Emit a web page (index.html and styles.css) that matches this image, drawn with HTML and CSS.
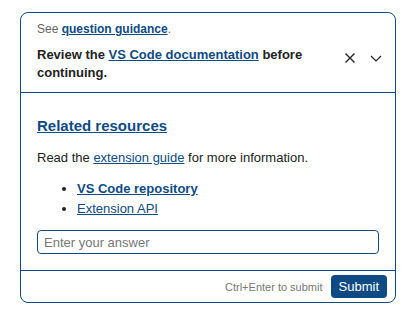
FILE: index.html
```html
<!DOCTYPE html>
<html lang="en">
  <head>
    <meta charset="UTF-8" />
    <meta name="viewport" content="width=device-width, initial-scale=1.0" />
    <title>Question</title>
    <link rel="stylesheet" href="styles.css">
  </head>
  <body>
    <div class="card">
      <div class="card-header">
        <div class="header-text">
          <p class="hint">See <a href="#" class="strong-link">question guidance</a>.</p>
          <p class="notice">Review the <a href="#">VS Code documentation</a> before continuing.</p>
        </div>
        <div class="header-actions">
          <button class="icon-btn" aria-label="Dismiss">
            <svg width="14" height="14" viewBox="0 0 14 14">
              <path d="M2.5 2.5 L11.5 11.5 M11.5 2.5 L2.5 11.5" stroke="#222" stroke-width="1.4" fill="none" />
            </svg>
          </button>
          <button class="icon-btn" aria-label="Collapse">
            <svg width="14" height="14" viewBox="0 0 14 14">
              <path d="M2 5 L7 10 L12 5" stroke="#222" stroke-width="1.2" fill="none" />
            </svg>
          </button>
        </div>
      </div>

      <div class="card-body">
        <h2><a href="#">Related resources</a></h2>
        <p>Read the <a href="#">extension guide</a> for more information.</p>
        <ul class="links">
          <li><a href="#" class="strong-link">VS Code repository</a></li>
          <li><a href="#">Extension API</a></li>
        </ul>
        <input type="text" class="answer" placeholder="Enter your answer" />
      </div>

      <div class="card-footer">
        <span class="shortcut">Ctrl+Enter to submit</span>
        <button class="submit">Submit</button>
      </div>
    </div>
  </body>
</html>
```

FILE: styles.css
```css
body {
  margin: 0;
  padding: 12px 20px;
  font-family: "Liberation Sans", Arial, sans-serif;
  color: #222;
  background: #fff;
}
a {
  color: #0e4a84;
}
.card {
  border: 1px solid #0e4a84;
  border-radius: 8px;
}
.card-header {
  display: flex;
  align-items: flex-start;
  padding: 9px 10px 10px 16px;
  border-bottom: 1px solid #0e4a84;
}
.header-text {
  flex: 1;
}
.hint {
  margin: 0 0 10px;
  font-size: 12px;
  color: #666;
}
.notice {
  margin: 0;
  font-size: 13px;
  font-weight: bold;
  line-height: 18px;
}
.strong-link {
  font-weight: bold;
}
.header-actions {
  display: flex;
  gap: 8px;
  margin-top: 27px;
  margin-left: 20px;
}
.icon-btn {
  background: none;
  border: none;
  padding: 0;
  width: 18px;
  height: 18px;
  display: flex;
  align-items: center;
  justify-content: center;
}
.card-body {
  padding: 16px 16px 16px;
}
.card-body h2 {
  margin: 8px 0 16px;
  font-size: 15px;
}
.card-body p {
  margin: 0 0 14px;
  font-size: 13px;
}
.links {
  margin: 0 0 11px;
  padding-left: 40px;
  font-size: 13px;
  line-height: 20px;
}
.answer {
  display: block;
  box-sizing: border-box;
  width: 100%;
  height: 24px;
  padding: 2px 6px;
  border: 1px solid #0e4a84;
  border-radius: 4px;
  font-family: inherit;
  font-size: 13px;
}
.answer::placeholder {
  color: #777;
}
.card-footer {
  display: flex;
  justify-content: flex-end;
  align-items: center;
  gap: 8px;
  padding: 4px 8px 4px;
  border-top: 1px solid #0e4a84;
}
.shortcut {
  font-size: 11px;
  color: #777;
}
.submit {
  background: #0e4a84;
  color: #fff;
  border: none;
  border-radius: 4px;
  padding: 4px 8px;
  font-family: inherit;
  font-size: 13px;
}
```
